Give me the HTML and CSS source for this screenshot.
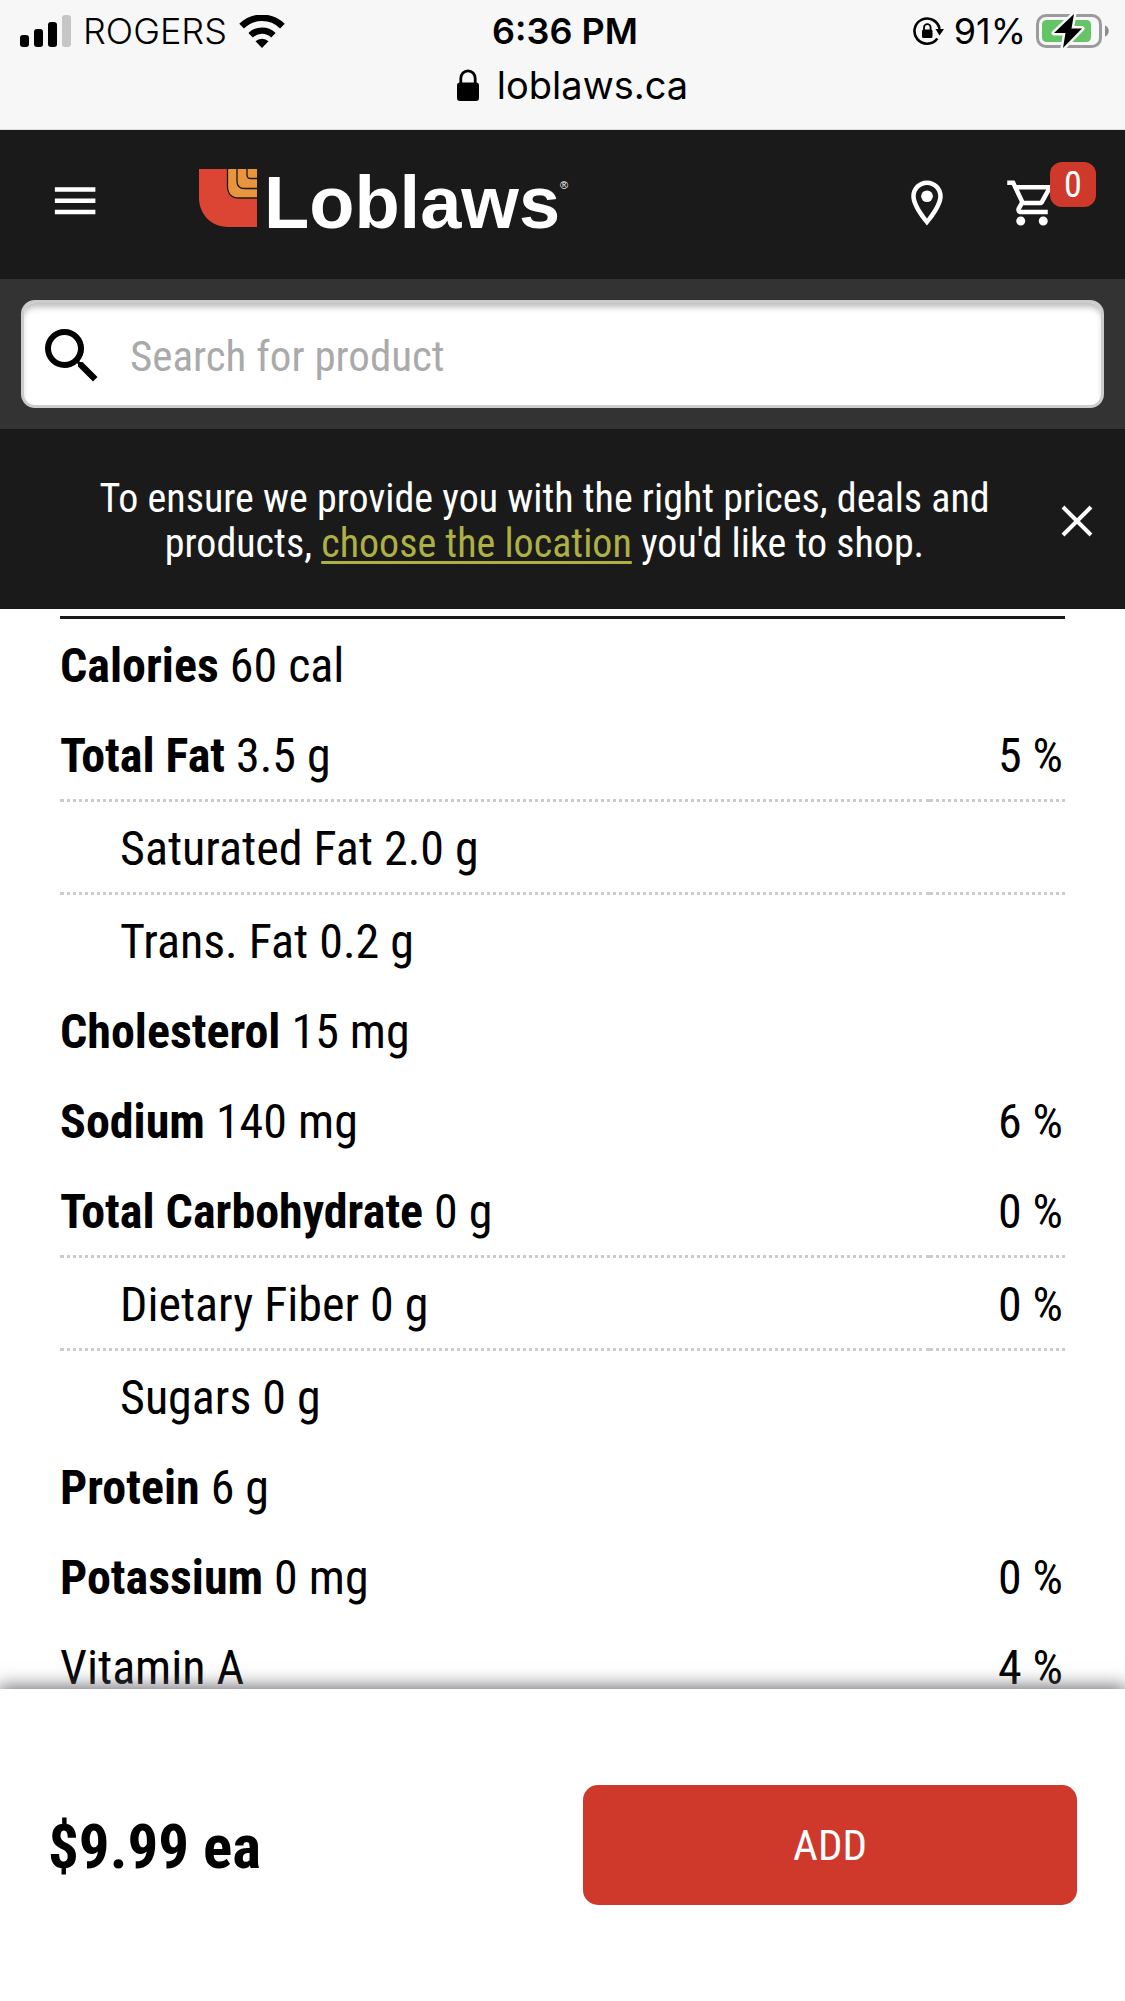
FILE: index.html
```html
<!DOCTYPE html>
<html lang="en">
<head>
<meta charset="utf-8">
<meta name="viewport" content="width=device-width, initial-scale=1">
<title>Loblaws</title>
<link rel="stylesheet" href="styles.css">
</head>
<body>
<div class="app">
  <div class="status">
    <div class="status-row">
      <div class="status-left">
        <svg width="51" height="32" viewBox="0 0 51 32" aria-hidden="true">
          <rect x="0" y="20" width="9" height="12" rx="3"/>
          <rect x="14" y="14" width="9" height="18" rx="3"/>
          <rect x="28" y="7" width="9" height="25" rx="3"/>
          <rect x="42" y="0" width="9" height="32" rx="3" fill="#c6c6c6"/>
        </svg>
        <span class="carrier">ROGERS</span>
        <svg width="46" height="33" viewBox="0 0 46 33" aria-hidden="true">
          <path d="M2.600 11.200a29 29 0 0 1 40.800 0" fill="none" stroke="#000" stroke-width="6.600"/>
          <path d="M11.600 20.200a16.500 16.500 0 0 1 22.800 0" fill="none" stroke="#000" stroke-width="6.400"/>
          <path d="M16.500 26.300a9.400 9.400 0 0 1 13 0L23 33z"/>
        </svg>
      </div>
      <span class="time">6:36 PM</span>
      <div class="status-right">
        <svg width="31" height="29" viewBox="0 0 31 29" aria-hidden="true">
          <path d="M24.300 21.500a12.600 12.600 0 1 1 2.200-9.500" fill="none" stroke="#000" stroke-width="2.600"/>
          <path d="M22.500 12h8.500l-4.500 6.500z"/>
          <rect x="9" y="12.500" width="10.500" height="8.500" rx="1.500"/>
          <path d="M11 13v-2.500a3.300 3.300 0 0 1 6.600 0v2.500" fill="none" stroke="#000" stroke-width="1.800"/>
        </svg>
        <span>91%</span>
        <svg width="74" height="36" viewBox="0 0 74 36" aria-hidden="true">
          <rect x="1.500" y="2.500" width="63" height="31" rx="8.500" fill="none" stroke="#9b9b9b" stroke-width="3"/>
          <path d="M69 12.500c5 1.500 5 9.500 0 11z" fill="#8d8d8d"/>
          <rect x="6" y="7" width="49" height="22" rx="4.500" fill="#65c466"/>
          <path d="M38 1L18 20h11.500L27 35 46 15.500H35.500z" fill="#000" stroke="#f7f7f7" stroke-width="5" stroke-linejoin="round" paint-order="stroke"/>
        </svg>
      </div>
    </div>
    <div class="address">
      <svg width="22" height="32" viewBox="0 0 22 32" aria-hidden="true">
        <rect x="0" y="13.500" width="22" height="18.500" rx="3"/>
        <path d="M3.800 15V9.500a7.200 7.700 0 0 1 14.400 0V15" fill="none" stroke="#000" stroke-width="2.800"/>
      </svg>
      <span>loblaws.ca</span>
    </div>
  </div>

  <header class="header">
    <button class="icon-button" type="button" aria-label="Menu">
      <svg width="54" height="54" viewBox="-0.500 1 24 24" fill="#fff"><path d="M3 18h18v-2H3v2zm0-5h18v-2H3v2zm0-7v2h18V6H3z"/></svg>
    </button>
    <a class="logo" href="#" aria-label="Loblaws home">
      <svg width="380" height="84" viewBox="0 -8 380 84">
        <path d="M0 0h58v58H29C11 58 0 44 0 29z" fill="#dc4433"/>
        <path d="M28.500 0V17C28.500 25 33 29 40 29H58V0z" fill="#e8953e"/>
        <path d="M28.500 0V17C28.500 25 33 29 40 29H58M38 0v12c0 5 2.500 7.500 7.500 7.500H58M48 0v6c0 2.500 1 3.500 3.500 3.500H58" fill="none" stroke="#1a1a1a" stroke-width="1.300"/>
        <text x="65" y="59" class="wordmark">Loblaws<tspan class="registered" dy="-39">®</tspan></text>
      </svg>
    </a>
    <nav class="actions">
      <button class="icon-button" type="button" aria-label="Choose location">
        <svg width="54" height="54" viewBox="0 0 24 24" fill="#fff"><path d="M12 2C8.130 2 5 5.130 5 9c0 5.250 7 13 7 13s7-7.750 7-13c0-3.870-3.130-7-7-7zM7 9c0-2.760 2.240-5 5-5s5 2.240 5 5c0 2.880-2.880 7.190-5 9.880C9.920 16.210 7 11.850 7 9z"/><circle cx="12" cy="9" r="2.600"/></svg>
      </button>
      <button class="icon-button cart" type="button" aria-label="Cart">
        <svg width="54" height="54" viewBox="0 0 24 24" fill="#fff"><path d="M15.550 13c.750 0 1.410-.410 1.750-1.030l3.580-6.490A.996.996 0 0 0 20.010 4H5.210l-.940-2H1v2h2l3.600 7.590-1.350 2.440C4.520 15.370 5.480 17 7 17h12v-2H7l1.100-2h7.450zM6.160 6h12.150l-2.760 5H8.530L6.160 6zM7 18c-1.100 0-1.990.900-1.990 2S5.900 22 7 22s2-.900 2-2-.900-2-2-2zm10 0c-1.100 0-1.990.900-1.990 2s.890 2 1.990 2 2-.900 2-2-.900-2-2-2z"/></svg>
        <span class="badge">0</span>
      </button>
    </nav>
  </header>

  <form class="search">
    <div class="search-box">
      <svg width="72" height="72" viewBox="0 0 24 24" aria-hidden="true"><path d="M15.500 14h-.790l-.280-.270A6.471 6.471 0 0 0 16 9.500 6.500 6.500 0 1 0 9.500 16c1.610 0 3.090-.590 4.230-1.570l.270.280v.790l5 4.990L20.490 19l-4.990-5zm-6 0C7.010 14 5 11.990 5 9.500S7.010 5 9.500 5 14 7.010 14 9.500 11.990 14 9.500 14z"/></svg>
      <input class="search-input" type="text" aria-label="Search for product" placeholder="Search for product">
    </div>
  </form>

  <div class="notice">
    <p class="notice-text">To ensure we provide you with the right prices, deals and<br>products, <a href="#">choose the location</a> you'd like to shop.</p>
    <button class="icon-button" type="button" aria-label="Close">
      <svg width="36" height="36" viewBox="0 0 36 36"><path d="M4 4l28 28M32 4L4 32" fill="none" stroke="#fff" stroke-width="4"/></svg>
    </button>
  </div>

  <main class="content">
    <table class="facts">
      <tbody>
        <tr><th scope="row"><b>Calories</b> 60 cal</th><td></td></tr>
        <tr class="dotted"><th scope="row"><b>Total Fat</b> 3.5 g</th><td>5 %</td></tr>
        <tr class="dotted sub"><th scope="row">Saturated Fat 2.0 g</th><td></td></tr>
        <tr class="sub"><th scope="row">Trans. Fat 0.2 g</th><td></td></tr>
        <tr><th scope="row"><b>Cholesterol</b> 15 mg</th><td></td></tr>
        <tr><th scope="row"><b>Sodium</b> 140 mg</th><td>6 %</td></tr>
        <tr class="dotted"><th scope="row"><b>Total Carbohydrate</b> 0 g</th><td>0 %</td></tr>
        <tr class="dotted sub"><th scope="row">Dietary Fiber 0 g</th><td>0 %</td></tr>
        <tr class="sub"><th scope="row">Sugars 0 g</th><td></td></tr>
        <tr><th scope="row"><b>Protein</b> 6 g</th><td></td></tr>
        <tr><th scope="row"><b>Potassium</b> 0 mg</th><td>0 %</td></tr>
        <tr><th scope="row">Vitamin A</th><td>4 %</td></tr>
      </tbody>
    </table>
  </main>

  <footer class="buy-bar">
    <strong class="price">$9.99 ea</strong>
    <button class="add" type="button">ADD</button>
  </footer>
</div>
</body>
</html>
```

FILE: styles.css
```css
*, *::before, *::after { box-sizing: border-box; }

body {
  margin: 0;
  background: #fff;
  color: #000;
  font-family: "Roboto Condensed", "Liberation Sans Narrow", "Arial Narrow", "Liberation Sans", sans-serif;
}

button, input { font-family: inherit; }
svg { display: block; flex: none; }

.app {
  display: flex;
  flex-direction: column;
  height: 100vh;
  overflow: hidden;
}

/* Phone status bar */
.status {
  flex: none;
  height: 130px;
  padding: 9px 15px 0 20px;
  background: #f7f7f7;
  border-bottom: 1px solid #dcdcdc;
  font-family: Inter, "Liberation Sans", sans-serif;
  font-size: 36px;
  line-height: 44px;
}

.status-row {
  display: grid;
  grid-template-columns: 1fr auto 1fr;
  align-items: center;
}

.status-left, .status-right {
  display: flex;
  align-items: center;
  gap: 12px;
}

.status-right {
  justify-content: flex-end;
  gap: 10px;
}

.carrier { font-weight: 300; }
.time { font-weight: 600; }

.address {
  display: flex;
  align-items: center;
  justify-content: center;
  gap: 18px;
  padding: 10px 0 0 15px;
  font-size: 38px;
}

/* Site header */
.header {
  flex: none;
  display: flex;
  align-items: center;
  height: 149px;
  padding: 0 66px 3px 47px;
  background: #1a1a1a;
}

.icon-button {
  flex: none;
  padding: 0;
  border: 0;
  background: none;
}

.logo { margin-left: 98px; }

.wordmark {
  fill: #fff;
  font: bold 74px "Liberation Sans", sans-serif;
}

.registered { font: 11px "Liberation Sans", sans-serif; }

.actions {
  display: flex;
  gap: 51px;
  margin-left: auto;
}

.cart { position: relative; }

.badge {
  position: absolute;
  left: 45px;
  top: -14px;
  width: 46px;
  height: 45px;
  border-radius: 12px;
  background: #ce392c;
  color: #fff;
  font-size: 36px;
  line-height: 47px;
  text-align: center;
}

/* Search */
.search {
  flex: none;
  padding: 21px;
  background: #333;
}

.search-box {
  display: flex;
  align-items: center;
  height: 108px;
  padding: 3px 12px 0;
  border: 3px solid #ccc;
  border-radius: 14px;
  background: #fff;
  box-shadow: inset 0 6px 6px -2px #bbb;
}

.search-input {
  flex: 1;
  min-width: 0;
  height: 72px;
  padding: 0 22px;
  border: 0;
  outline: 0;
  background: none;
  font-size: 43px;
}

.search-input::placeholder { color: #aaa; opacity: 1; }

/* Location notice */
.notice {
  flex: none;
  display: flex;
  align-items: center;
  padding: 47px 30px 43px;
  background: #1a1a1a;
  color: #fff;
}

.notice-text {
  flex: 1;
  margin: 0;
  font-size: 40px;
  line-height: 45px;
  text-align: center;
}

.notice-text a {
  color: #adb043;
  text-underline-offset: 4px;
  text-decoration-thickness: 3px;
  text-decoration-skip-ink: none;
}

/* Nutrition facts */
.content {
  flex: 1;
  min-height: 0;
  overflow: hidden;
  padding: 7px 60px 0;
}

.facts {
  width: 100%;
  border-top: 3px solid #1a1a1a;
  border-spacing: 0;
  font-size: 48px;
  line-height: 54px;
}

.facts th, .facts td {
  padding: 20px 0 16px;
  font-weight: 400;
  text-align: left;
}

.facts td {
  padding-right: 2px;
  text-align: right;
}

.dotted th, .dotted td { border-bottom: 3px dotted #ccc; }
.facts .sub th { padding-left: 60px; }

/* Purchase bar */
.buy-bar {
  flex: none;
  position: relative;
  display: flex;
  align-items: center;
  justify-content: space-between;
  padding: 96px 48px;
  background: #fff;
  box-shadow: 0 0 18px 2px #66666f;
}

.price {
  padding-top: 4px;
  font-size: 61px;
  line-height: 72px;
}

.add {
  width: 48%;
  height: 120px;
  border: 0;
  border-radius: 15px;
  background: #ce392c;
  color: #fff;
  font-size: 43px;
}
```
